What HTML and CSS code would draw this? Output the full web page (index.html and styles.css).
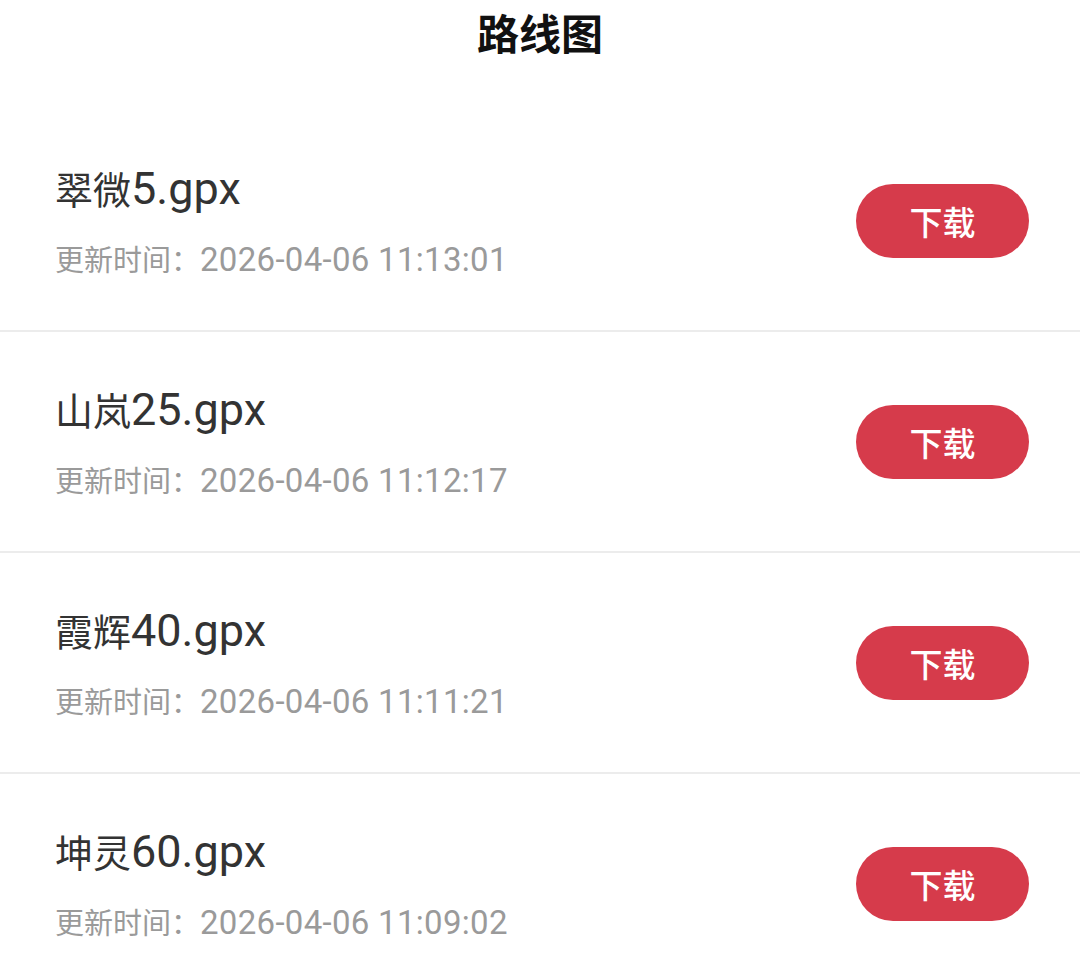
FILE: index.html
```html
<!DOCTYPE html>
<html lang="zh-CN">
<head>
    <meta charset="UTF-8">
    <meta name="viewport" content="width=device-width, initial-scale=1.0">
    <title>路线图</title>
    <link rel="stylesheet" href="styles.css">
</head>
<body>
    <div class="page">
        <header class="top-bar">
            <h1>路线图</h1>
        </header>

        <ul class="route-list">
            <li class="route-item">
                <div class="route-info">
                    <p class="route-name">翠微<span class="latin">5.gpx</span></p>
                    <p class="route-time">更新时间：<span class="latin">2026-04-06 11:13:01</span></p>
                </div>
                <button class="download-btn">下载</button>
            </li>
            <li class="route-item">
                <div class="route-info">
                    <p class="route-name">山岚<span class="latin">25.gpx</span></p>
                    <p class="route-time">更新时间：<span class="latin">2026-04-06 11:12:17</span></p>
                </div>
                <button class="download-btn">下载</button>
            </li>
            <li class="route-item">
                <div class="route-info">
                    <p class="route-name">霞辉<span class="latin">40.gpx</span></p>
                    <p class="route-time">更新时间：<span class="latin">2026-04-06 11:11:21</span></p>
                </div>
                <button class="download-btn">下载</button>
            </li>
            <li class="route-item">
                <div class="route-info">
                    <p class="route-name">坤灵<span class="latin">60.gpx</span></p>
                    <p class="route-time">更新时间：<span class="latin">2026-04-06 11:09:02</span></p>
                </div>
                <button class="download-btn">下载</button>
            </li>
        </ul>
    </div>
</body>
</html>
```

FILE: styles.css
```css
/* Route list page */
body {
    font-family: Roboto, "Noto Sans CJK SC", sans-serif;
    background-color: #fff;
    margin: 0;
    padding: 0;
}

.page {
    width: 1080px;
    height: 963px;
    overflow: hidden;
}

.top-bar {
    height: 111px;
    display: flex;
    justify-content: center;
}

.top-bar h1 {
    margin: 0;
    padding-top: 7px;
    font-family: "Noto Sans CJK SC", sans-serif;
    font-size: 42px;
    line-height: 50px;
    font-weight: 700;
    color: #111;
}

.route-list {
    list-style: none;
    margin: 0;
    padding: 0;
}

.route-item {
    height: 219px;
    display: flex;
    align-items: center;
    justify-content: space-between;
    padding: 0 51px 0 55px;
    border-bottom: 2px solid #ececec;
}

.route-info {
    padding-top: 3px;
}

.route-name {
    margin: 0;
    font-size: 38px;
    line-height: 50px;
    color: #333;
}

.route-time {
    margin: 24px 0 0;
    font-size: 29px;
    line-height: 40px;
    color: #9a9a9a;
}

/* latin part of the text is drawn larger than the hanzi */
.route-name .latin {
    font-size: 45px;
}

.route-time .latin {
    font-size: 33px;
    letter-spacing: 0.3px;
}

.download-btn {
    width: 173px;
    height: 74px;
    border: none;
    border-radius: 37px;
    background-color: #d63b4b;
    color: #fff;
    font-family: "Noto Sans CJK SC", sans-serif;
    font-size: 33px;
    font-weight: 500;
    cursor: pointer;
}
```
